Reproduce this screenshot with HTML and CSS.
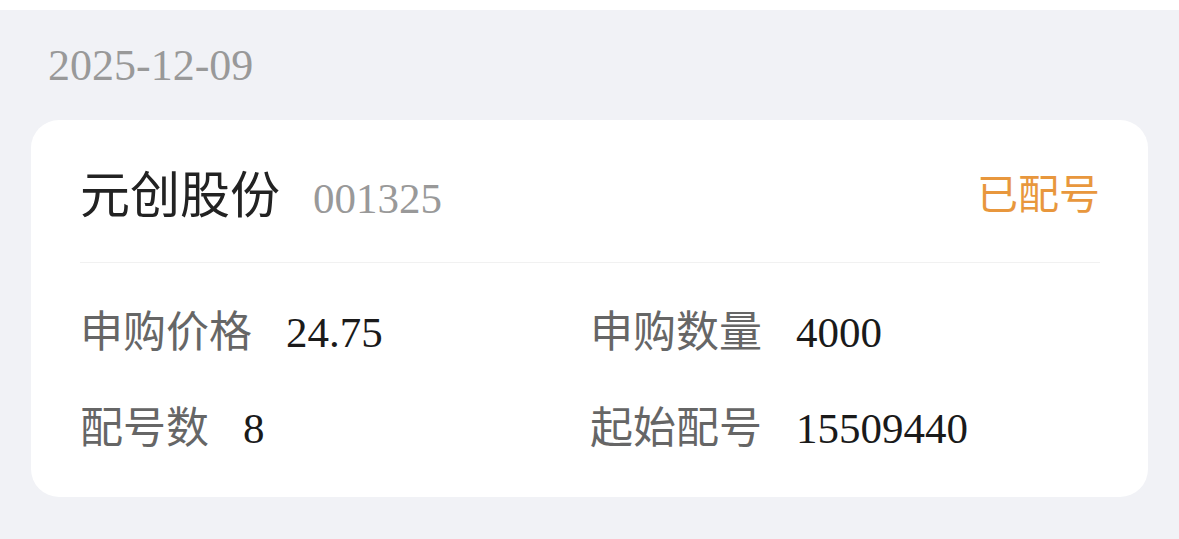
FILE: index.html
```html
<!DOCTYPE html>
<html lang="zh-CN">
<head>
    <meta charset="UTF-8">
    <meta name="viewport" content="width=device-width, initial-scale=1.0">
    <title>配号记录</title>
    <link rel="stylesheet" href="styles.css">
</head>
<body>
    <div class="topbar"></div>

    <div class="list">
        <div class="date">2025-12-09</div>

        <div class="card">
            <div class="card-head">
                <div class="stock">
                    <span class="stock-name">元创股份</span>
                    <span class="stock-code">001325</span>
                </div>
                <span class="status">已配号</span>
            </div>

            <div class="card-body">
                <div class="item">
                    <span class="label">申购价格</span>
                    <span class="value">24.75</span>
                </div>
                <div class="item">
                    <span class="label">申购数量</span>
                    <span class="value">4000</span>
                </div>
                <div class="item">
                    <span class="label">配号数</span>
                    <span class="value">8</span>
                </div>
                <div class="item">
                    <span class="label">起始配号</span>
                    <span class="value">15509440</span>
                </div>
            </div>
        </div>
    </div>
</body>
</html>
```

FILE: styles.css
```css
body{
    margin: 0;
    background: #f1f2f6;
    font-family: "Noto Sans CJK SC", "Noto Sans", sans-serif;
    height: 539px;
    overflow: hidden;
}

.topbar{
    height: 10px;
    background: #fff;
}

.list{
    padding: 0 31px;
}

.date{
    padding: 34px 0 0 17px;
    margin-bottom: 32px;
    font-family: "Liberation Serif", serif;
    font-size: 44px;
    line-height: 44px;
    color: #999;
}

.card{
    background: #fff;
    border-radius: 28px;
    padding: 0 48px 0 49px;
}

.card-head{
    height: 142px;
    display: flex;
    align-items: center;
    justify-content: space-between;
    border-bottom: 1px solid #f1f1f1;
}

.stock{
    display: flex;
    align-items: baseline;
}

.stock-name{
    font-size: 50px;
    color: #222;
}

.stock-code{
    margin-left: 33px;
    font-family: "Liberation Serif", serif;
    font-size: 43px;
    color: #999;
}

.status{
    font-size: 41px;
    color: #e8973d;
}

.card-body{
    display: grid;
    grid-template-columns: 1fr 1fr;
    row-gap: 36px;
    padding: 35px 0 43px;
}

.item{
    display: flex;
    align-items: baseline;
    height: 60px;
    line-height: 60px;
}

.label{
    font-size: 43px;
    color: #666;
}

.value{
    margin-left: 34px;
    font-family: "Liberation Serif", serif;
    font-size: 43px;
    color: #1a1a1a;
}
```
